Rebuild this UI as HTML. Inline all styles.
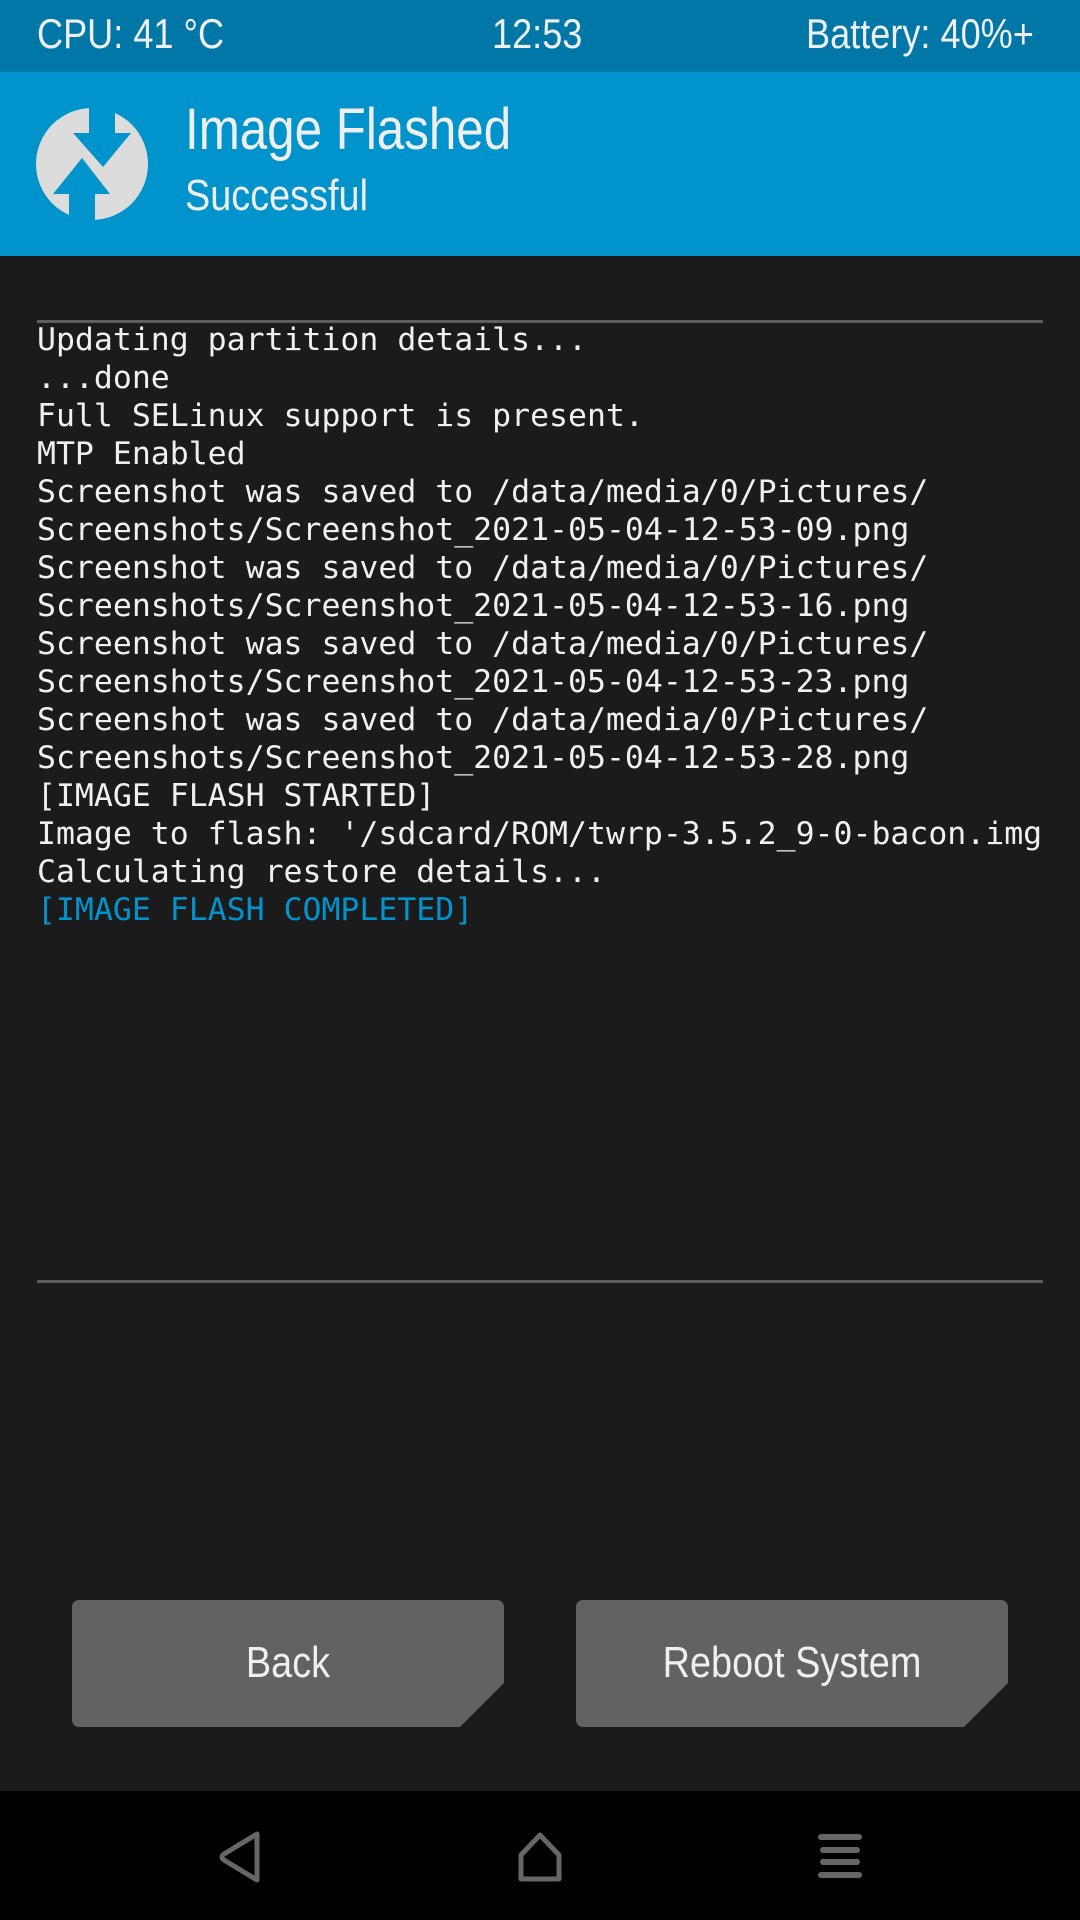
<!DOCTYPE html>
<html><head><meta charset="utf-8"><style>
*{margin:0;padding:0;box-sizing:border-box}
body{width:1080px;height:1920px;background:#1b1b1b;position:relative;overflow:hidden;font-family:"Liberation Sans",sans-serif;color:#efefef}
.status{position:absolute;left:0;top:0;width:1080px;height:72px;background:#0077a6}
.status span{position:absolute;top:10px;font-size:42px;transform:scaleX(0.86);transform-origin:left top;white-space:nowrap}
.hdr{position:absolute;left:0;top:72px;width:1080px;height:184px;background:#0093cc}
.t1{position:absolute;left:185px;top:96px;font-size:58px;transform:scaleX(0.85);transform-origin:left top;white-space:nowrap}
.t2{position:absolute;left:185px;top:171px;font-size:44px;transform:scaleX(0.86);transform-origin:left top;white-space:nowrap}
.rule{position:absolute;left:37px;width:1006px;height:3px;background:#5e5e5e}
.con{position:absolute;left:37px;top:321px;font-family:"DejaVu Sans Mono","Liberation Mono",monospace;font-size:31.5px;line-height:38px;white-space:pre;color:#f0f0f0}
.blue{color:#0093cc}
.btn{position:absolute;top:1600px;width:432px;height:127px;background:#626262;border-radius:7px;clip-path:polygon(0 0,100% 0,100% 83px,388px 100%,0 100%)}
.btn span{position:absolute;left:0;right:0;top:38px;text-align:center;font-size:44px;transform:scaleX(0.86)}
.nav{position:absolute;left:0;top:1791px;width:1080px;height:129px;background:#000}
</style></head><body>
<div class="status">
<span style="left:37px">CPU: 41 °C</span>
<span style="left:492px">12:53</span>
<span style="left:806px">Battery: 40%+</span>
</div>
<div class="hdr"></div>
<svg style="position:absolute;left:36px;top:108px" width="112" height="112" viewBox="0 0 112 112">
<circle cx="56" cy="56" r="56" fill="#dcdcdc"/>
<polygon points="53,-1 53,25 37,25 67,59 95,25 79,25 79,-1" fill="#0093cc"/>
<polygon points="33,113 33,86 17,86 46,50 74,86 59,86 59,113" fill="#0093cc"/>
</svg>
<div class="t1">Image Flashed</div>
<div class="t2">Successful</div>
<div class="rule" style="top:320px"></div>
<div class="con">Updating partition details...
...done
Full SELinux support is present.
MTP Enabled
Screenshot was saved to /data/media/0/Pictures/
Screenshots/Screenshot_2021-05-04-12-53-09.png
Screenshot was saved to /data/media/0/Pictures/
Screenshots/Screenshot_2021-05-04-12-53-16.png
Screenshot was saved to /data/media/0/Pictures/
Screenshots/Screenshot_2021-05-04-12-53-23.png
Screenshot was saved to /data/media/0/Pictures/
Screenshots/Screenshot_2021-05-04-12-53-28.png
[IMAGE FLASH STARTED]
Image to flash: '/sdcard/ROM/twrp-3.5.2_9-0-bacon.img
Calculating restore details...
<span class="blue">[IMAGE FLASH COMPLETED]</span></div>
<div class="rule" style="top:1280px"></div>
<div class="btn" style="left:72px"><span>Back</span></div>
<div class="btn" style="left:576px"><span>Reboot System</span></div>
<div class="nav">
<svg style="position:absolute;left:216px;top:40px" width="50" height="52" viewBox="0 0 50 52"><path d="M41,3 L41,49 L8,29 Q4,26 8,23 Z" fill="none" stroke="#666" stroke-width="5" stroke-linejoin="round"/></svg>
<svg style="position:absolute;left:516px;top:40px" width="48" height="52" viewBox="0 0 48 52"><path d="M24,4 L43,24 L43,48 L5,48 L5,24 Z" fill="none" stroke="#666" stroke-width="5" stroke-linejoin="round"/></svg>
<svg style="position:absolute;left:817px;top:42px" width="46" height="46" viewBox="0 0 46 46"><g stroke="#666" stroke-width="6" stroke-linecap="round"><line x1="4" y1="4" x2="42" y2="4"/><line x1="6" y1="17" x2="40" y2="17"/><line x1="6" y1="29" x2="40" y2="29"/><line x1="4" y1="42" x2="42" y2="42"/></g></svg>
</div>
</body></html>
